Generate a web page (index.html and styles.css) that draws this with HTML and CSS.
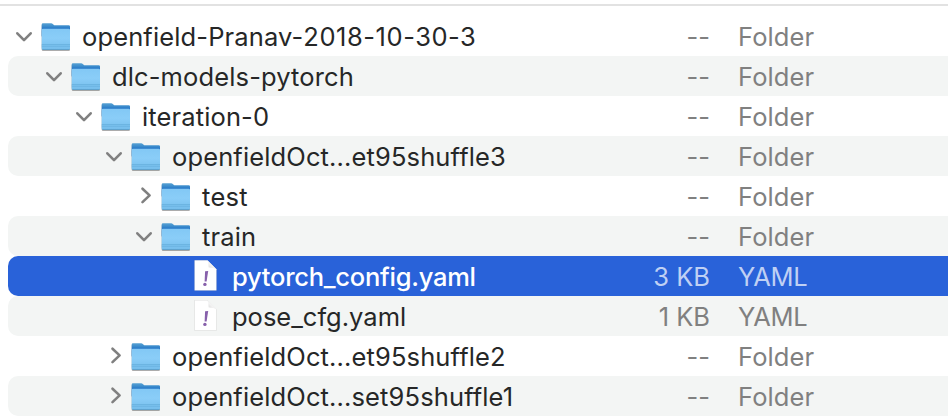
FILE: index.html
```html
<!DOCTYPE html>
<html lang="en">
<head>
<meta charset="utf-8">
<title>Files</title>
<link rel="stylesheet" href="styles.css">
</head>
<body>
<svg class="defs" aria-hidden="true">
  <defs>
    <linearGradient id="back" x1="0" y1="7" x2="0" y2="13" gradientUnits="userSpaceOnUse"><stop offset="0" stop-color="#5aa3d3"/><stop offset=".5" stop-color="#3f8fcd"/><stop offset="1" stop-color="#2374c6"/></linearGradient>
    <linearGradient id="front" x1="0" y1="0" x2="0" y2="1"><stop offset="0" stop-color="#82c8f5"/><stop offset=".45" stop-color="#8acdf8"/><stop offset="1" stop-color="#74bdeb"/></linearGradient>
    <linearGradient id="fold" x1="0" y1="1" x2="1" y2="0"><stop offset="0" stop-color="#fff"/><stop offset=".25" stop-color="#e3e3e3"/><stop offset=".6" stop-color="#fff"/></linearGradient>
    <symbol id="down" viewBox="0 0 18 40"><path class="stroke" d="M2.3 17.3 9 24.1l6.7-6.8"/></symbol>
    <symbol id="right" viewBox="0 0 18 40"><path class="stroke" d="m7.5 12.7 7.1 6.7-7.1 6.7"/></symbol>
    <symbol id="folder" viewBox="0 0 32 40">
      <path fill="url(#back)" d="M1.7 8.6Q1.7 7.2 3 7.2h8.2q.9 0 1.6.7l1.1 1q.4.3 1 .3h13.8q1.3 0 1.3 1.3V20H1.7z"/>
      <path fill="url(#front)" d="M1.7 14q0-1.2 1.3-1.2h25.7q1.3 0 1.3 1.2v18.4q0 1.4-1.3 1.4H3q-1.3 0-1.3-1.4z"/>
      <path stroke="#5fa9d8" stroke-width=".6" d="M1.7 28.5H30M1.7 30.2H30"/>
      <path stroke="#5199c7" stroke-width=".8" d="M2.4 33.6h27"/>
    </symbol>
    <symbol id="file" viewBox="0 0 26 40">
      <path fill="#fff" d="M1.5 4.3h13l9 9v21.2h-22z"/>
      <path fill="url(#fold)" d="M14.2 4.3q1.8 2.3 1.4 7.2 5.2-.1 7.9 2z"/>
      <path fill="#8760ab" d="m12.1 15.2 3.1-.2-1.6 10.5h-2z"/><circle fill="#8760ab" cx="11.9" cy="28.4" r="1.7"/>
    </symbol>
  </defs>
</svg>
<main class="list">
  <div class="row d0"><svg class="chev"><use href="#down"/></svg><svg class="folder"><use href="#folder"/></svg><span class="name">openfield-Pranav-<span class="date">2018-10-30-3</span></span><span class="size">--</span><span class="kind">Folder</span></div>
  <div class="row d1"><svg class="chev"><use href="#down"/></svg><svg class="folder"><use href="#folder"/></svg><span class="name">dlc-models-pytorch</span><span class="size">--</span><span class="kind">Folder</span></div>
  <div class="row d2"><svg class="chev"><use href="#down"/></svg><svg class="folder"><use href="#folder"/></svg><span class="name">iteration-0</span><span class="size">--</span><span class="kind">Folder</span></div>
  <div class="row d3"><svg class="chev"><use href="#down"/></svg><svg class="folder"><use href="#folder"/></svg><span class="name">openfieldOct...et95shuffle3</span><span class="size">--</span><span class="kind">Folder</span></div>
  <div class="row d4"><svg class="chev"><use href="#right"/></svg><svg class="folder"><use href="#folder"/></svg><span class="name short">test</span><span class="size">--</span><span class="kind">Folder</span></div>
  <div class="row d4"><svg class="chev"><use href="#down"/></svg><svg class="folder"><use href="#folder"/></svg><span class="name">train</span><span class="size">--</span><span class="kind">Folder</span></div>
  <div class="row d5 selected"><svg class="file"><use href="#file"/></svg><span class="name">pytorch_config.yaml</span><span class="size">3 KB</span><span class="kind yaml">YAML</span></div>
  <div class="row d5"><svg class="file"><use href="#file"/></svg><span class="name plain">pose_cfg.yaml</span><span class="size">1 KB</span><span class="kind yaml">YAML</span></div>
  <div class="row d3"><svg class="chev"><use href="#right"/></svg><svg class="folder"><use href="#folder"/></svg><span class="name">openfieldOct...et95shuffle2</span><span class="size">--</span><span class="kind">Folder</span></div>
  <div class="row d3"><svg class="chev"><use href="#right"/></svg><svg class="folder"><use href="#folder"/></svg><span class="name">openfieldOct...set95shuffle1</span><span class="size">--</span><span class="kind">Folder</span></div>
</main>
</body>
</html>
```
FILE: styles.css
```css
* { box-sizing: border-box; }
body {
  margin: 0;
  height: 418px;
  overflow: hidden;
  background: #fff;
  color: #262727;
  font: 400 25.5px/40px Inter, "Liberation Sans", sans-serif;
}
.defs { position: absolute; width: 0; height: 0; }
.list {
  margin-top: 4px;
  padding: 10px 0 0 8px;
  border-top: 2px solid #e2e2e2;
}
.row {
  display: flex;
  height: 40px;
  padding-right: 10px;
  border-radius: 10px 0 0 10px;
  white-space: nowrap;
}
.row:nth-child(even) { background: #f3f5f4; }
.row svg { flex: none; height: 40px; }
.chev { width: 18px; margin-right: 7px; }
.stroke { fill: none; stroke: #808080; stroke-width: 2.6; stroke-linecap: round; stroke-linejoin: round; }
.folder { width: 32px; margin-right: 10px; filter: drop-shadow(0 1px .7px rgba(0, 0, 0, .35)); }
.file { width: 26px; margin-right: 13px; filter: drop-shadow(0 .6px .5px rgba(0, 0, 0, .3)); }
.d0 { padding-left: 7px; }
.d1 { padding-left: 37px; }
.d2 { padding-left: 67px; }
.d3 { padding-left: 97px; }
.d4 { padding-left: 127px; }
.d5 { padding-left: 185px; }
.name { flex: 1; padding-top: 1px; letter-spacing: .13px; }
.name.short { letter-spacing: .3px; }
.name.plain { letter-spacing: 0; }
.date { letter-spacing: .55px; }
.size { width: 100px; padding-top: 1px; text-align: right; color: #808080; }
.kind { width: 200px; margin-left: 28px; padding-top: 1px; letter-spacing: .1px; color: #808080; }
.yaml { letter-spacing: -.3px; }
.row.selected { background: #2962d9; color: #fff; }
.selected .name { font-weight: 500; letter-spacing: -.26px; }
.selected .size, .selected .kind { color: #bfd0f4; }
```
